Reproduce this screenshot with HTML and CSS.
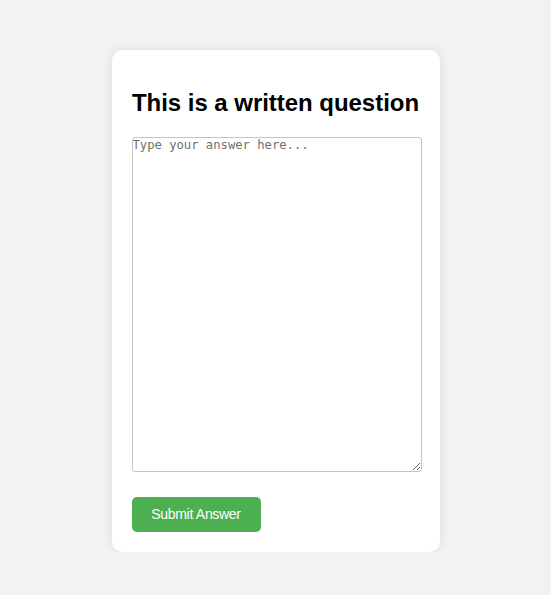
FILE: index.html
```html
<!DOCTYPE html>
<html>
<head>
<meta charset="utf-8">
<link rel="stylesheet" href="styles.css">
</head>
<body>
<div class="page">
  <div class="card">
    <h2 class="question">This is a written question</h2>
    <textarea class="answer" placeholder="Type your answer here..."></textarea>
    <button class="submit">Submit Answer</button>
  </div>
</div>
</body>
</html>
```
FILE: styles.css
```css
html, body {
  margin: 0;
  padding: 0;
  background: #f2f2f2;
  font-family: "Liberation Sans", Arial, sans-serif;
}
.page {
  display: flex;
  justify-content: center;
  padding-top: 50px;
}
.card {
  width: 288px;
  padding: 20px;
  background: #fff;
  border-radius: 10px;
  box-shadow: 0 0 10px rgba(0, 0, 0, 0.1);
}
.question {
  font-size: 24px;
  font-weight: bold;
  margin: 19.9px 0;
  line-height: 26.8px;
  color: #000;
  white-space: nowrap;
  text-align: center;
  letter-spacing: -0.04px;
}
.answer {
  display: block;
  box-sizing: content-box;
  width: 288px;
  height: 333px;
  margin: 0 0 25px 0;
  padding: 0;
  border: 1px solid #c4c4c4;
  border-radius: 3px;
  font-family: "DejaVu Sans Mono", monospace;
  font-size: 12.2px;
  line-height: 15px;
  resize: vertical;
}
.answer::placeholder {
  color: #6f6f6f;
}
.submit {
  display: block;
  width: 129px;
  height: 35px;
  padding: 0;
  border: none;
  border-radius: 5px;
  background: #4caf50;
  color: #fff;
  font-family: "Liberation Sans", Arial, sans-serif;
  font-size: 14px;
  letter-spacing: -0.3px;
  cursor: pointer;
}
```
